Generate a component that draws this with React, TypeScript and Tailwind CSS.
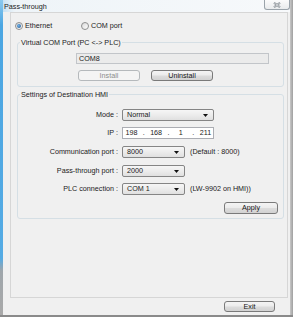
import React from "react";

const FONT = "font-['Liberation_Sans',Arial,sans-serif]";

function Button({ w, h, children, disabled }: { w: string; h: string; children: React.ReactNode; disabled?: boolean }) {
  return (
    <div
      className={`${w} ${h} flex items-center justify-center rounded-[3px] border ${
        disabled
          ? "border-[#b5b9bc] bg-[#f4f4f4] text-[#8c8c8c]"
          : "border-[#7a7a7a] bg-[linear-gradient(to_bottom,#f4f4f4_0%,#ececec_45%,#dcdcdc_55%,#d2d2d2_100%)] text-[#151515]"
      }`}
    >
      {children}
    </div>
  );
}

function Arrow() {
  return (
    <svg width="5" height="3" viewBox="0 0 5 3" className="shrink-0">
      <path d="M0 0 L5 0 L2.5 3 Z" fill="#111" />
    </svg>
  );
}

function Select({ w, value }: { w: string; value: string }) {
  return (
    <div
      className={`${w} h-[12px] flex items-center justify-between pl-[4px] pr-[5px] rounded-[2px] border border-[#858585] bg-[linear-gradient(to_bottom,#f6f6f6_0%,#ececec_50%,#e0e0e0_100%)]`}
    >
      <span>{value}</span>
      <Arrow />
    </div>
  );
}

function Radio({ checked }: { checked?: boolean }) {
  return (
    <div className="w-[8px] h-[8px] rounded-full border border-[#8e8f8f] bg-[linear-gradient(135deg,#d9d9d9,#ffffff)] flex items-center justify-center shrink-0">
      {checked && <div className="w-[4px] h-[4px] rounded-full bg-[radial-gradient(circle_at_40%_40%,#6fb3ea,#1d4f88)]" />}
    </div>
  );
}

function Row({ label, mt, children }: { label: string; mt: string; children: React.ReactNode }) {
  return (
    <div className={`${mt} h-[12px] flex items-center`}>
      <div className="w-[100px] text-right">{label}</div>
      <div className="ml-[4px] flex items-center">{children}</div>
    </div>
  );
}

export default function App() {
  return (
    <div className={`w-[295px] h-[318px] bg-white ${FONT} text-[7.2px] leading-none text-[#1b1b1b]`}>
      <div className="flex w-[293px] h-[317px] border-b-2 border-[#8a8a8a]">
        <div className="w-[3px] h-full bg-[linear-gradient(to_bottom,#8cc8ee_0%,#4ba6e2_8%,#55abe4_82%,#9fa6ab_86%,#a9a9a9_100%)]" />
        <div className="flex flex-col w-[287px] h-full bg-[#f0f0f0]">
          <div className="flex h-[12px] items-start justify-between bg-[linear-gradient(to_right,#c9e1f2_0px,#eef4f8_12px,#f7f9fb_100%)]">
            <span className="pl-[1px] pt-[3px]">Pass-through</span>
            <div className="w-[26px] h-[10px] border border-t-0 border-[#9aa3aa] rounded-b-[3px] bg-[linear-gradient(to_bottom,#fbfbfb,#e9ebed)] flex items-center justify-center">
              <svg width="8" height="6" viewBox="0 0 8 6">
                <path d="M1 0.8 L7 5.2 M7 0.8 L1 5.2" stroke="#7b838a" strokeWidth="2" />
                <path d="M1 0.8 L7 5.2 M7 0.8 L1 5.2" stroke="#f4f4f4" strokeWidth="0.7" />
              </svg>
            </div>
          </div>

          <div className="ml-[7px] w-[278px] h-[286px] border border-[#d6d6d6] flex flex-col">
            <div className="mt-[8px] h-[10px] flex items-center pl-[4px]">
              <div className="w-[66px] flex items-center">
                <Radio checked />
                <span className="ml-[2px]">Ethernet</span>
              </div>
              <div className="flex items-center">
                <Radio />
                <span className="ml-[2px]">COM port</span>
              </div>
            </div>

            <div className="mt-[11px] ml-[6px] w-[267px] border border-[#d5dfe5] rounded-[3px] pb-[5px] flex flex-col">
              <div className="-mt-[5px] ml-[2px] px-[1px] w-fit h-[9px] leading-[9px] bg-[#f0f0f0]">Virtual COM Port (PC &lt;-&gt; PLC)</div>
              <div className="mt-[6px] ml-[58px] w-[193px] h-[11px] border border-[#c2c5c9] bg-[#ebebeb] flex items-center pl-[2px]">COM8</div>
              <div className="mt-[6px] ml-[60px] flex gap-[11px]">
                <Button w="w-[62px]" h="h-[11px]" disabled>Install</Button>
                <Button w="w-[62px]" h="h-[11px]">Uninstall</Button>
              </div>
            </div>

            <div className="mt-[7px] ml-[6px] w-[267px] border border-[#d5dfe5] rounded-[3px] pb-[4px] flex flex-col">
              <div className="-mt-[5px] ml-[2px] px-[1px] w-fit h-[9px] leading-[9px] bg-[#f0f0f0]">Settings of Destination HMI</div>
              <Row label="Mode :" mt="mt-[10px]">
                <Select w="w-[92px]" value="Normal" />
              </Row>
              <Row label="IP :" mt="mt-[6px]">
                <div className="w-[92px] h-[12px] border border-[#abadb3] bg-white flex items-center pl-[1px]">
                  <span className="w-[15px] text-center">198</span>
                  <span className="w-[10px] text-center">.</span>
                  <span className="w-[15px] text-center">168</span>
                  <span className="w-[10px] text-center">.</span>
                  <span className="w-[15px] text-center">1</span>
                  <span className="w-[10px] text-center">.</span>
                  <span className="w-[15px] text-center">211</span>
                </div>
              </Row>
              <Row label="Communication port :" mt="mt-[7px]">
                <Select w="w-[63px]" value="8000" />
                <span className="ml-[5px]">(Default : 8000)</span>
              </Row>
              <Row label="Pass-through port :" mt="mt-[7px]">
                <Select w="w-[63px]" value="2000" />
              </Row>
              <Row label="PLC connection :" mt="mt-[6px]">
                <Select w="w-[63px]" value="COM 1" />
                <span className="ml-[5px]">(LW-9902 on HMI))</span>
              </Row>
              <div className="mt-[7px] self-end mr-[5px]">
                <Button w="w-[54px]" h="h-[12px]">Apply</Button>
              </div>
            </div>
          </div>

          <div className="mt-[3px] flex justify-end pr-[15px]">
            <Button w="w-[51px]" h="h-[11px]">Exit</Button>
          </div>
        </div>
        <div className="w-[3px] h-full bg-[linear-gradient(to_right,#c8c8c8,#a0a0a0)]" />
      </div>
    </div>
  );
}
